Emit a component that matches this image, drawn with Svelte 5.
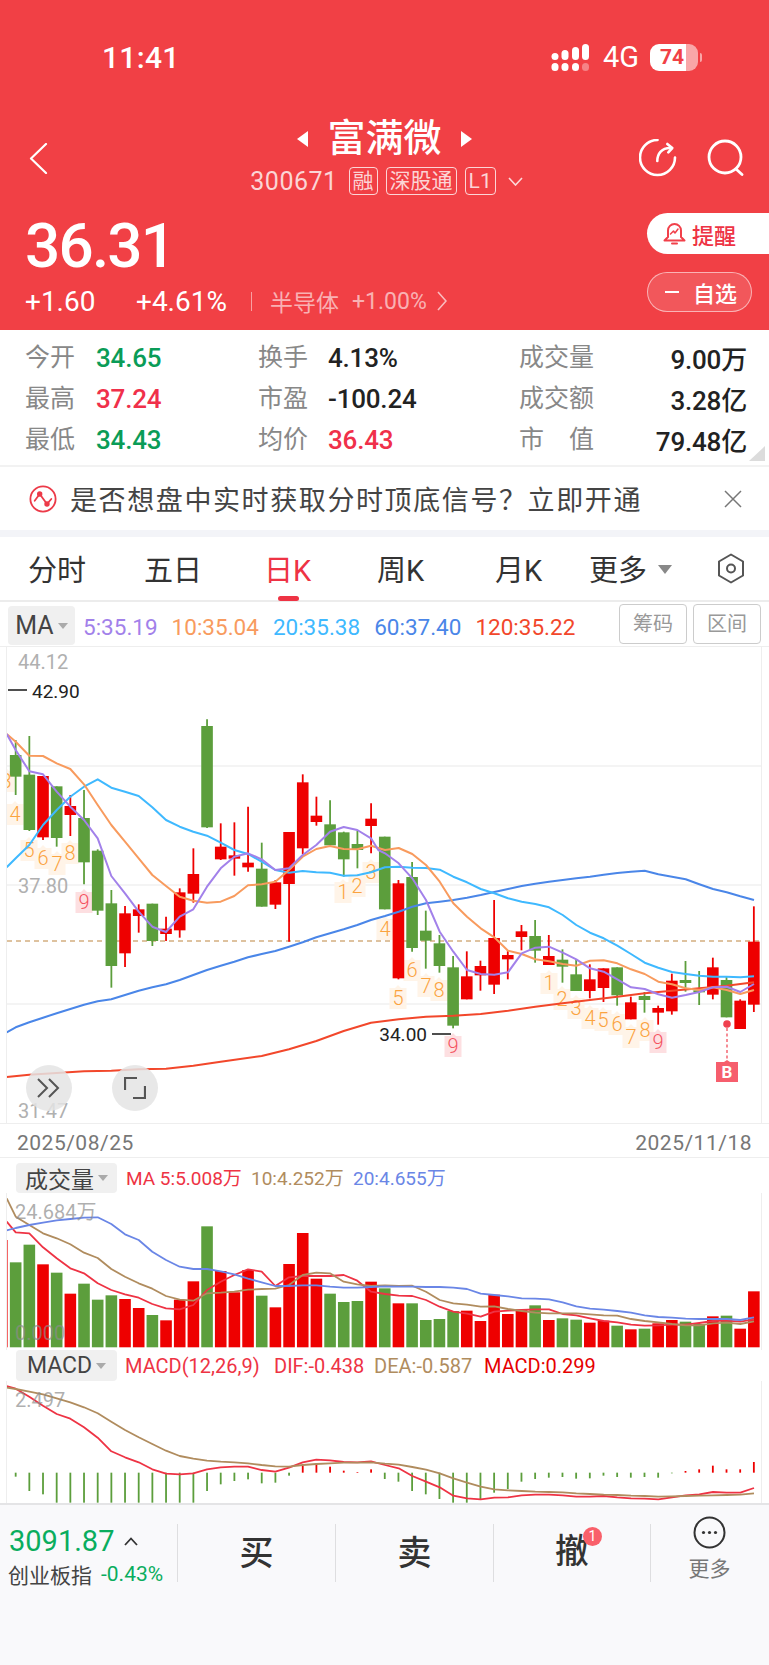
<script>
  const X0 = 15.67, STEP = 13.67;
  const cx = (i) => X0 + STEP * i;

  // zoomed crops were read at 3x, so these convert back to page pixels
  const zA = (v) => 650 + v / 3;
  const zB = (v) => 800 + v / 3;
  const zV = (v) => 1150 + v / 3;

  const rawA = [
    ["g",270,315,380,435],["g",258,374,540,543],["r",378,378,562,570],["g",409,409,564,590],["r",435,468,495,558],
    ["g",420,504,637,703],["g",598,602,782,795],["g",720,760,948,1013],["r",768,790,910,951],["r",763,778,798,848],
    ["g",761,761,873,888],["r",800,836,852,873],["r",715,727,841,863],["r",595,672,731,758],["g",208,228,532,534],
    ["r",520,590,628,630],["r",517,616,626,677],["r",470,638,652,665],["g",578,656,770,770],["r",690,697,764,777],
    ["r",546,546,702,875],["r",373,397,595,612],["r",440,497,516,527],["g",451,523,586,586],["g",545,547,628,680],
    ["g",543,582,600,655],["r",460,506,528,610],["g",560,560,778,778]
  ];
  const rawB = [
    ["r",240,250,535,538],["g",186,231,444,455],["g",332,392,422,506],["g",405,430,498,518],["g",468,502,677,685],
    ["r",454,529,598,598],["r",482,498,526,572],["r",300,414,554,582],["r",452,465,478,538],["r",375,394,411,451],
    ["g",360,408,452,488],["r",405,468,495,495],["g",448,479,500,548],["g",478,523,573,573],["r",493,538,573,595],
    ["r",505,505,564,606],["g",502,502,586,617],["r",590,607,658,658],["g",576,588,600,638],["r",617,624,638,674],
    ["r",521,542,634,644],["g",483,540,549,575],["g",513,571,575,615],["r",473,502,584,598],["g",530,540,652,652],
    ["r",598,602,687,687],["r",319,425,614,636]
  ];
  const candles = [
    ...rawA.map((c) => [c[0], ...c.slice(1).map(zA)]),
    ...rawB.map((c) => [c[0], ...c.slice(1).map(zB)])
  ];

  const line = (a, ay, b, by) =>
    [...a.map(([x, y]) => [x / 3, ay(y)]), ...b.map(([x, y]) => [x / 3 + 385, by(y)])]
      .map(([x, y]) => x.toFixed(1) + "," + y.toFixed(1))
      .join(" ");

  const ma5 = line(
    [[20,252],[47,300],[88,364],[129,373],[170,425],[211,470],[252,510],[293,565],[334,678],[375,730],[416,785],[457,830],[498,846],[539,800],[580,778],[621,710],[662,655],[703,620],[744,610],[785,628],[826,660],[867,655],[908,615],[949,585],[990,545],[1031,531],[1072,540],[1113,565]],
    zA,
    [[-20,150],[0,160],[41,190],[82,235],[123,300],[164,395],[205,455],[246,510],[287,522],[328,524],[369,517],[410,460],[451,443],[492,440],[533,458],[574,478],[615,505],[656,515],[697,538],[738,562],[779,567],[820,583],[861,593],[902,585],[943,576],[984,562],[1025,560],[1066,576],[1107,552]],
    zB
  );
  const ma10 = line(
    [[20,252],[47,275],[88,317],[129,318],[170,340],[211,357],[252,403],[293,465],[334,525],[375,575],[416,625],[457,675],[498,708],[539,740],[580,752],[621,758],[662,755],[703,738],[744,706],[785,703],[826,695],[867,660],[908,620],[949,597],[990,588],[1031,597],[1072,598],[1113,587]],
    zA,
    [[0,150],[41,144],[82,162],[123,195],[164,245],[205,310],[246,350],[287,385],[328,412],[369,452],[410,462],[451,478],[492,484],[533,492],[574,497],[615,482],[656,481],[697,490],[738,508],[779,522],[820,545],[861,553],[902,565],[943,570],[984,562],[1025,570],[1066,582],[1107,570]],
    zB
  );
  const ma20 = line(
    [[20,652],[47,625],[88,585],[129,525],[170,480],[211,440],[252,410],[293,388],[334,413],[375,425],[416,438],[457,472],[498,510],[539,530],[580,545],[621,557],[662,578],[703,600],[744,612],[785,635],[826,660],[867,668],[908,663],[949,667],[990,668],[1031,677],[1072,676],[1113,667]],
    zA,
    [[0,202],[41,200],[82,203],[123,204],[164,209],[205,230],[246,247],[287,267],[328,280],[369,295],[410,305],[451,312],[492,322],[533,345],[574,375],[615,398],[656,415],[697,437],[738,462],[779,488],[820,503],[861,516],[902,522],[943,527],[984,530],[1025,530],[1066,532],[1107,529]],
    zB
  );
  const ma60 = line(
    [[20,1147],[47,1132],[88,1117],[129,1103],[170,1090],[211,1077],[252,1064],[293,1054],[334,1048],[375,1035],[416,1022],[457,1012],[498,1003],[539,990],[580,975],[621,960],[662,947],[703,935],[744,922],[785,912],[826,903],[867,890],[908,877],[949,862],[990,850],[1031,838],[1072,825],[1113,810]],
    zA,
    [[0,348],[41,335],[82,320],[123,310],[164,305],[205,300],[246,293],[287,285],[328,276],[369,267],[410,258],[451,251],[492,245],[533,240],[574,235],[615,230],[656,224],[697,219],[738,215],[779,212],[820,223],[861,230],[902,238],[943,253],[984,267],[1025,277],[1066,289],[1107,300]],
    zB
  );
  const ma120 = line(
    [[20,1281],[88,1274],[170,1269],[252,1264],[334,1262],[416,1258],[498,1256],[580,1247],[662,1235],[785,1218],[867,1198],[949,1173],[1031,1143],[1113,1118]],
    zA,
    [[0,663],[41,658],[82,654],[123,650],[205,647],[287,642],[369,632],[451,620],[533,610],[615,600],[697,590],[779,580],[861,572],[943,565],[1025,557],[1107,547]],
    zB
  );

  const tags = [
    [6,780,"3"],[15,813,"4"],[29,849,"5"],[43,857,"6"],[57,863,"7"],[70,852,"8"],[84,901,"9",true],
    [343,891,"1"],[357,885,"2"],[371,871,"3"],[385,928,"4"],
    [398,997,"5"],[412,969,"6"],[426,985,"7"],[439,989,"8"],[453,1045,"9",true],
    [549,982,"1"],[562,998,"2"],[576,1007,"3"],[590,1017,"4"],[603,1019,"5"],[617,1023,"6"],[631,1036,"7"],[645,1029,"8"],[658,1041,"9",true]
  ];

  const volA = [["g",337],["g",284],["r",343],["g",368],["r",431],["g",401],["g",449],["g",436],["r",447],["r",474],["g",495],["r",511],["r",449],["r",394],["g",229],["r",363],["r",427],["r",360],["g",437],["r",472],["r",342],["r",249],["r",386],["g",431],["g",456],["g",453],["r",395],["g",415],
    ["r",460],["g",460],["g",510],["g",507],["g",483],["r",482],["r",513],["r",434],["r",492],["r",478],["g",466],["r",510],["g",505],["g",509],["r",518],["r",512],["g",527],["r",538],["g",536],["r",520],["r",510],["g",515],["g",522],["r",499],["g",497],["r",536],["r",424]];

  const volMa5 = line(
    [[20,215],[47,247],[88,250],[129,292],[170,325],[211,355],[252,370],[293,400],[334,420],[375,433],[416,443],[457,462],[498,475],[539,478],[580,465],[621,420],[662,395],[703,375],[744,358],[785,365],[826,408],[867,382],[908,378],[949,378],[990,378],[1031,375],[1072,392],[1113,425]],
    zV,
    [[0,432],[41,437],[82,438],[123,450],[164,470],[205,485],[246,491],[287,500],[328,485],[369,482],[410,480],[451,478],[492,478],[533,492],[574,496],[615,505],[656,513],[697,517],[738,524],[779,527],[820,526],[861,524],[902,524],[943,519],[984,513],[1025,512],[1066,515],[1107,508]],
    zV
  );
  const volMa10 = line(
    [[20,145],[47,200],[88,225],[129,250],[170,265],[211,283],[252,308],[293,324],[334,357],[375,380],[416,400],[457,416],[498,438],[539,449],[580,452],[621,430],[662,428],[703,425],[744,419],[785,417],[826,416],[867,405],[908,375],[949,368],[990,370],[1031,395],[1072,403],[1113,408]],
    zV,
    [[0,406],[41,408],[82,407],[123,425],[164,450],[205,460],[246,464],[287,470],[328,469],[369,477],[410,483],[451,488],[492,490],[533,490],[574,490],[615,493],[656,496],[697,497],[738,507],[779,513],[820,517],[861,522],[902,526],[943,526],[984,520],[1025,518],[1066,522],[1107,514]],
    zV
  );
  const volMa20 = line(
    [[20,241],[47,234],[88,225],[129,218],[170,211],[211,207],[252,203],[293,202],[334,222],[375,253],[416,270],[457,305],[498,330],[539,350],[580,357],[621,357],[662,364],[703,373],[744,386],[785,397],[826,408],[867,408],[908,406],[949,406],[990,410],[1031,413],[1072,413],[1113,411]],
    zV,
    [[0,409],[41,410],[82,410],[123,411],[164,411],[205,413],[246,417],[287,431],[328,435],[369,439],[410,445],[451,446],[492,448],[533,457],[574,469],[615,476],[656,479],[697,483],[738,488],[779,496],[820,501],[861,503],[902,506],[943,507],[984,507],[1025,507],[1066,510],[1107,502]],
    zV
  );

  const dif = line(
    [[20,708],[47,716],[88,740],[129,767],[170,792],[211,806],[252,832],[293,863],[334,904],[375,922],[416,937],[457,958],[498,971],[539,973],[580,970],[621,958],[662,952],[703,950],[744,950],[785,960],[826,965],[867,953],[908,937],[949,929],[990,931],[1031,936],[1072,937],[1113,934]],
    zV,
    [[0,945],[41,955],[82,978],[123,995],[164,1012],[205,1037],[246,1045],[287,1048],[328,1043],[369,1042],[410,1036],[451,1034],[492,1034],[533,1036],[574,1040],[615,1040],[656,1038],[697,1042],[738,1045],[779,1046],[820,1048],[861,1042],[902,1036],[943,1033],[984,1026],[1025,1028],[1066,1028],[1107,1014]],
    zV
  );
  const dea = line(
    [[20,713],[47,717],[88,725],[129,733],[170,745],[211,757],[252,772],[293,790],[334,815],[375,840],[416,862],[457,882],[498,902],[539,918],[580,926],[621,932],[662,935],[703,937],[744,940],[785,945],[826,949],[867,950],[908,945],[949,942],[990,940],[1031,938],[1072,938],[1113,937]],
    zV,
    [[0,941],[41,944],[82,951],[123,959],[164,970],[205,985],[246,998],[287,1010],[328,1018],[369,1021],[410,1023],[451,1025],[492,1026],[533,1027],[574,1030],[615,1032],[656,1034],[697,1035],[738,1037],[779,1038],[820,1040],[861,1039],[902,1038],[943,1037],[984,1036],[1025,1035],[1066,1034],[1107,1030]],
    zV
  );

  // histogram ends, zero line sits at 968 in the crop
  const hist = [980,1023,1033,1058,1058,1058,1058,1058,1058,1058,1058,1058,1058,1058,1023,1003,993,988,1000,998,977,947,940,950,962,966,958,987,
    995,1023,1033,1047,1058,1058,1050,1028,1017,995,987,983,981,986,985,977,981,983,981,983,970,963,958,947,958,958,936];

  const quotes = [
    [["今开","34.65","green"],["换手","4.13%",""],["成交量","9.00万",""]],
    [["最高","37.24","red"],["市盈","-100.24",""],["成交额","3.28亿",""]],
    [["最低","34.43","green"],["均价","36.43","red"],["市值","79.48亿",""]]
  ];
  const tabs = [["分时",28],["五日",144],["日K",264],["周K",377],["月K",495]];
</script>

<div class="phone">
  <header class="head">
    <div class="status">
      <span class="time">11:41</span>
      <div class="status-right">
        <svg class="signal" width="38" height="27" viewBox="0 0 38 27" fill="#fff">
          <rect x="0.5" y="9" width="7" height="7" rx="3.5"/><rect x="0.5" y="19" width="7" height="8" rx="3.5"/>
          <rect x="10.5" y="6" width="7" height="10" rx="3.5"/><rect x="10.5" y="19" width="7" height="8" rx="3.5"/>
          <rect x="21" y="3" width="7" height="13" rx="3.5"/><rect x="21" y="19" width="7" height="8" rx="3.5"/>
          <rect x="31" y="0" width="7" height="16" rx="3.5"/><rect x="31" y="19" width="7" height="8" rx="3.5" fill-opacity="0.35"/>
        </svg>
        <span class="net">4G</span>
        <div class="battery"><span>74</span></div>
        <i class="nub"></i>
      </div>
    </div>

    <div class="nav">
      <svg class="back" width="19" height="31" viewBox="0 0 19 31" fill="none" stroke="#fff" stroke-width="2.2" stroke-linejoin="round" stroke-linecap="round">
        <polyline points="17,1 2,15.5 17,30"/>
      </svg>
      <div class="title-wrap">
        <div class="title-row">
          <i class="tri tri-l"></i>
          <span class="title">富满微</span>
          <i class="tri tri-r"></i>
        </div>
        <div class="sub-row">
          <span class="code">300671</span>
          <span class="tag">融</span>
          <span class="tag">深股通</span>
          <span class="tag">L1</span>
          <svg width="15" height="9" viewBox="0 0 15 9" fill="none" stroke="#fff" stroke-opacity="0.8" stroke-width="1.6"><polyline points="1,1 7.5,8 14,1"/></svg>
        </div>
      </div>
      <div class="nav-icons">
        <svg width="38" height="38" viewBox="0 0 38 38" fill="none" stroke="#fff" stroke-width="2.6" stroke-linecap="round" stroke-linejoin="round">
          <path d="M18.5 1A17.5 17.5 0 1 0 36 18.5"/>
          <path d="M18.3 22c0-7 4-13 13-13"/>
          <polyline points="28.3,5 33.3,9 29.3,13.3"/>
        </svg>
        <svg width="37" height="37" viewBox="0 0 37 37" fill="none" stroke="#fff" stroke-width="2.8" stroke-linecap="round">
          <circle cx="18" cy="18" r="16"/>
          <line x1="29" y1="30" x2="35" y2="35.5"/>
        </svg>
      </div>
    </div>

    <div class="price-row">
      <div class="price-left">
        <div class="price">36.31</div>
        <div class="change">
          <span class="chg-a">+1.60</span>
          <span class="chg-b">+4.61%</span>
          <i class="bar"></i>
          <span class="sector">半导体</span>
          <span class="sector-pct">+1.00%</span>
          <svg width="10" height="20" viewBox="0 0 10 20" fill="none" stroke="#fff" stroke-opacity="0.65" stroke-width="1.6"><polyline points="1,1 9,10 1,19"/></svg>
        </div>
      </div>
      <div class="price-actions">
        <div class="remind">
          <svg width="23" height="23" viewBox="0 0 23 23" fill="none" stroke="#f1404a" stroke-width="2" stroke-linejoin="round" stroke-linecap="round">
            <path d="M5 15V8.5a6.5 6.5 0 0 1 13 0V15l3.5 3.5H1.5z"/>
            <path d="M9 21.5h5"/>
            <polyline points="7.5,12 10.5,9 12,11 15,7" stroke-width="1.5"/>
          </svg>
          <span>提醒</span>
        </div>
        <div class="watch"><i></i><span>自选</span></div>
      </div>
    </div>
  </header>

  <section class="quotes">
    {#each quotes as row}
      {#each row as q, i}
        <span class="q-label" class:wide={i === 2} class:spread={q[0] === "市值"}>
          {#if q[0] === "市值"}<b>市</b><b>值</b>{:else}{q[0]}{/if}
        </span>
        <span class="q-val {q[2]}" class:end={i === 2}>{q[1]}</span>
      {/each}
    {/each}
    <i class="corner"></i>
  </section>

  <section class="notice">
    <svg width="28" height="28" viewBox="0 0 28 28" fill="none" stroke="#ec3a48" stroke-width="1.8" stroke-linecap="round">
      <circle cx="14" cy="14" r="12.6"/>
      <polyline points="5.7,15.7 10.7,9 18,19 22.3,14"/>
      <g fill="#ec3a48" stroke="none"><circle cx="10.7" cy="9" r="2.7"/><circle cx="18" cy="19" r="2.7"/></g>
    </svg>
    <span class="notice-text">是否想盘中实时获取分时顶底信号？立即开通</span>
    <svg class="notice-x" width="18" height="18" viewBox="0 0 18 18" stroke="#777" stroke-width="1.5" fill="none"><path d="M1 1l16 16M17 1L1 17"/></svg>
  </section>

  <nav class="tabs">
    {#each tabs as t}
      <span class="tab" class:active={t[0] === "日K"} style="left:{t[1]}px">{t[0]}</span>
    {/each}
    <span class="tab" style="left:589px">更多</span>
    <i class="tab-caret"></i>
    <svg class="tab-hex" width="28" height="31" viewBox="0 0 28 31" fill="none" stroke="#555" stroke-width="2" stroke-linejoin="round">
      <path d="M14 1.5l12 7v14l-12 7-12-7v-14z"/>
      <circle cx="14" cy="15.5" r="4"/>
    </svg>
    <i class="tab-ink"></i>
  </nav>

  <div class="ma-row">
    <div class="pill pill-ma">MA<i></i></div>
    <span class="leg ma5">5:35.19</span>
    <span class="leg ma10">10:35.04</span>
    <span class="leg ma20">20:35.38</span>
    <span class="leg ma60">60:37.40</span>
    <span class="leg ma120">120:35.22</span>
    <div class="ghost-btns">
      <span>筹码</span>
      <span>区间</span>
    </div>
  </div>

  <div class="chart main">
    <svg width="769" height="476" viewBox="0 647 769 476">
      <defs><clipPath id="plot"><rect x="7" y="647" width="755" height="476"/></clipPath></defs>
      {#each [766, 885, 1004] as y}
        <line x1="7" x2="762" y1={y} y2={y} stroke="#f0f0f0" stroke-width="1.5"/>
      {/each}
      <g clip-path="url(#plot)">
        {#each tags as t}
          <path d="M{t[0]-8.5} {t[1]-9} L{t[0]-3} {t[1]-9} L{t[0]} {t[1]-12} L{t[0]+3} {t[1]-9} L{t[0]+8.5} {t[1]-9} V{t[1]+12} H{t[0]-8.5} Z" fill={t[3] ? "#fddfe1" : "#fff4e8"}/>
        {/each}
      </g>
      <line x1="7" x2="762" y1="941" y2="941" stroke="#d4ae80" stroke-width="1.5" stroke-dasharray="5 4"/>
      {#each candles as c, i}
        <line x1={cx(i)} x2={cx(i)} y1={c[1]} y2={c[4]} stroke={c[0] === "r" ? "#ee0000" : "#5c9e3c"} stroke-width="1.8"/>
        <rect x={cx(i) - 5.8} y={c[2]} width="11.6" height={Math.max(c[3] - c[2], 2)} fill={c[0] === "r" ? "#ee0000" : "#5c9e3c"}/>
      {/each}
      <g clip-path="url(#plot)">
        {#each tags as t}
          <text class="turn" x={t[0]} y={t[1] + 8} fill={t[3] ? "#f4525f" : "#fba33f"} text-anchor="middle">{t[2]}</text>
        {/each}
      </g>
      <g fill="none" stroke-width="2" stroke-linejoin="round">
        <polyline points={ma120} stroke="#f2472b"/>
        <polyline points={ma60} stroke="#4a86e8"/>
        <polyline points={ma20} stroke="#3fb9ff"/>
        <polyline points={ma10} stroke="#f89b5e"/>
        <polyline points={ma5} stroke="#a281ea"/>
      </g>
      <text class="axis" x="18" y="669">44.12</text>
      <line x1="8" x2="27" y1="690" y2="690" stroke="#222" stroke-width="1.6"/>
      <text class="axis dark" x="32" y="698">42.90</text>
      <text class="axis" x="18" y="893">37.80</text>
      <text class="axis dark" x="427" y="1041" text-anchor="end">34.00</text>
      <line x1="432" x2="451" y1="1034" y2="1034" stroke="#222" stroke-width="1.6"/>
      <text class="axis" x="18" y="1118">31.47</text>
      <circle cx="727" cy="1024" r="3.8" fill="#f0404f"/>
      <line x1="727" x2="727" y1="1028" y2="1061" stroke="#f0404f" stroke-width="1.2" stroke-dasharray="3 2.5"/>
      <path d="M716 1062h8l3-2 3 2h8v20h-22z" fill="#f65e6d"/>
      <text class="b-mark" x="727" y="1078" text-anchor="middle">B</text>
    </svg>
    <button class="round round-a" aria-label="展开">
      <svg width="24" height="20" viewBox="0 0 24 20" fill="none" stroke="#555" stroke-width="2"><polyline points="1,1 10,10 1,19"/><polyline points="12,1 21,10 12,19"/></svg>
    </button>
    <button class="round round-b" aria-label="全屏">
      <svg width="22" height="22" viewBox="0 0 22 22" fill="none" stroke="#555" stroke-width="2.2"><polyline points="1,13 1,1 13,1"/><polyline points="21,9 21,21 9,21"/></svg>
    </button>
  </div>

  <div class="dates"><span>2025/08/25</span><span>2025/11/18</span></div>

  <div class="legend-row vol-leg">
    <div class="pill pill-sub">成交量<i></i></div>
    <span class="red-t l-a">MA 5:5.008万</span>
    <span class="brown-t l-b">10:4.252万</span>
    <span class="blue-t l-c">20:4.655万</span>
  </div>

  <div class="chart vol">
    <svg width="769" height="157" viewBox="0 1193 769 157">
      <rect x="6" y={zV(270)} width="1.6" height={1347.3 - zV(270)} fill="#ee0000"/>
      {#each volA as b, i}
        <rect x={cx(i) - 5.8} y={zV(b[1])} width="11.6" height={1347.3 - zV(b[1])} fill={b[0] === "r" ? "#ee0000" : "#5c9e3c"}/>
      {/each}
      <g fill="none" stroke-width="1.8" stroke-linejoin="round">
        <polyline points={volMa5} stroke="#ee3344"/>
        <polyline points={volMa10} stroke="#b08c5e"/>
        <polyline points={volMa20} stroke="#6a86e6"/>
      </g>
      <text class="axis tint" x="15" y="1219">24.684万</text>
      <text class="axis tint" x="15" y="1340">0.000</text>
    </svg>
  </div>

  <div class="legend-row macd-leg">
    <div class="pill pill-sub">MACD<i></i></div>
    <span class="red-t m-a">MACD(12,26,9)</span>
    <span class="red-t m-b">DIF:-0.438</span>
    <span class="brown-t m-c">DEA:-0.587</span>
    <span class="pure-t m-d">MACD:0.299</span>
  </div>

  <div class="chart macd">
    <svg width="769" height="122" viewBox="0 1381 769 122">
      {#each hist as h, i}
        <rect x={cx(i) - 0.9} y={h > 968 ? zV(968) : zV(h)} width="1.8" height={Math.abs(zV(h) - zV(968))} fill={h > 968 ? "#5c9e3c" : "#ee0000"}/>
      {/each}
      <g fill="none" stroke-width="1.8" stroke-linejoin="round">
        <polyline points={dif} stroke="#ee3344"/>
        <polyline points={dea} stroke="#b08c5e"/>
      </g>
      <text class="axis tint" x="15" y="1407">2.497</text>
    </svg>
  </div>

  <footer class="foot">
    <div class="index">
      <div class="idx-top"><span class="idx-num">3091.87</span><svg width="14" height="9" viewBox="0 0 14 9" fill="none" stroke="#333" stroke-width="1.8"><polyline points="1,8 7,1.5 13,8"/></svg></div>
      <div class="idx-bot"><span>创业板指</span><b>-0.43%</b></div>
    </div>
    <div class="act">买</div>
    <div class="act">卖</div>
    <div class="act"><span class="withdraw">撤<em>1</em></span></div>
    <div class="more">
      <svg width="33" height="33" viewBox="0 0 33 33" fill="none" stroke="#333" stroke-width="2">
        <circle cx="16.5" cy="16.5" r="15"/>
        <g fill="#333" stroke="none"><circle cx="10.5" cy="16.5" r="1.6"/><circle cx="16.5" cy="16.5" r="1.6"/><circle cx="22.5" cy="16.5" r="1.6"/></g>
      </svg>
      <span>更多</span>
    </div>
  </footer>
</div>

<style>
  :global(body) {
    margin: 0;
    background: #fff;
  }

  .phone {
    width: 769px;
    height: 1665px;
    overflow: hidden;
    font-family: "Roboto", "Noto Sans CJK SC", sans-serif;
    color: #333;
    background: #fff;
    position: relative;
  }

  .head {
    height: 330px;
    background: #f14045;
    color: #fff;
    display: flex;
    flex-direction: column;
  }

  .status {
    height: 71px;
    padding: 44px 67px 0 102px;
    box-sizing: border-box;
    display: flex;
    justify-content: space-between;
    align-items: center;
  }

  .time {
    font-size: 30px;
    font-weight: 500;
    line-height: 27px;
    letter-spacing: 0.3px;
  }

  .status-right {
    display: flex;
    align-items: center;
    position: relative;
  }

  .net {
    font-size: 29px;
    line-height: 27px;
    margin: 0 11px 0 14px;
  }

  .battery {
    width: 48px;
    height: 27px;
    border-radius: 9px;
    background: linear-gradient(90deg, #fff 0, #fff 36px, #f9a6a8 36px);
    color: #f14045;
    font-size: 21px;
    font-weight: 700;
    line-height: 27px;
    text-align: center;
    padding-right: 4px;
    box-sizing: border-box;
  }

  .nub {
    width: 2px;
    height: 9px;
    margin-left: 2px;
    border-radius: 0 2px 2px 0;
    background: #f9a6a8;
  }

  .nav {
    height: 78px;
    margin-top: 47px;
    padding: 0 25px 0 29px;
    display: grid;
    grid-template-columns: 1fr auto 1fr;
    align-items: center;
  }

  .back {
    margin-top: 2px;
  }

  .title-wrap {
    display: flex;
    flex-direction: column;
    align-items: center;
  }

  .title-row {
    display: flex;
    align-items: center;
    height: 40px;
    gap: 19px;
    margin-left: -4px;
  }

  .title {
    font-size: 38px;
    font-weight: 500;
    line-height: 40px;
    margin-top: -2px;
  }

  .tri {
    width: 0;
    height: 0;
    border-top: 8px solid transparent;
    border-bottom: 8px solid transparent;
  }

  .tri-l {
    border-right: 11px solid #fff;
  }

  .tri-r {
    border-left: 11px solid #fff;
  }

  .sub-row {
    display: flex;
    align-items: center;
    margin-top: 8px;
    height: 28px;
    color: rgba(255, 255, 255, 0.78);
    font-size: 25px;
  }

  .code {
    letter-spacing: 0.5px;
    margin-right: 11px;
  }

  .tag {
    border: 1px solid rgba(255, 255, 255, 0.78);
    border-radius: 4px;
    height: 26px;
    line-height: 26px;
    font-size: 21px;
    padding: 0 3px;
    margin-right: 8px;
  }

  .sub-row svg {
    margin-left: 4px;
  }

  .nav-icons {
    display: flex;
    justify-content: flex-end;
    gap: 30px;
    margin-top: 2px;
  }

  .price-row {
    margin-top: 17px;
    display: flex;
    justify-content: space-between;
  }

  .price-left {
    padding-left: 25px;
  }

  .price {
    font-size: 62px;
    line-height: 62px;
    font-weight: 500;
    letter-spacing: -1.8px;
    margin-top: 2px;
  }

  .change {
    display: flex;
    align-items: center;
    height: 30px;
    margin-top: 9px;
    font-size: 28px;
  }

  .chg-a {
    width: 111px;
  }

  .bar {
    width: 1px;
    height: 19px;
    margin: 0 18px 0 24px;
    background: rgba(255, 255, 255, 0.5);
  }

  .sector {
    font-size: 23px;
    color: rgba(255, 255, 255, 0.6);
  }

  .sector-pct {
    font-size: 23px;
    color: rgba(255, 255, 255, 0.6);
    margin: 0 10px 0 13px;
  }

  .price-actions {
    width: 122px;
    display: flex;
    flex-direction: column;
    gap: 18px;
  }

  .remind {
    height: 41px;
    border-radius: 21px 0 0 21px;
    background: #fff;
    color: #ee3344;
    display: flex;
    align-items: center;
    padding-left: 16px;
    gap: 6px;
    font-size: 22px;
    font-weight: 500;
  }

  .watch {
    width: 105px;
    height: 40px;
    box-sizing: border-box;
    border: 1px solid rgba(255, 255, 255, 0.55);
    border-radius: 20px;
    background: rgba(255, 255, 255, 0.12);
    display: flex;
    align-items: center;
    padding-left: 17px;
    gap: 14px;
    font-size: 22px;
    font-weight: 500;
    color: #fff;
  }

  .watch i {
    width: 14px;
    height: 2.5px;
    background: #fff;
  }

  .quotes {
    height: 137px;
    box-sizing: border-box;
    border-bottom: 2px solid #f2f2f2;
    padding: 7px 22px 0 25px;
    display: grid;
    grid-template-columns: 71px 162px 70px 191px 100px 128px;
    grid-auto-rows: 41px;
    align-items: center;
    position: relative;
  }

  .q-label {
    font-size: 25px;
    color: #888;
    white-space: nowrap;
    margin-bottom: 5px;
  }

  .spread {
    display: flex;
    justify-content: space-between;
    width: 75px;
  }

  .spread b {
    font-weight: 400;
  }

  .q-val {
    font-size: 26px;
    color: #222;
    font-weight: 500;
    letter-spacing: -0.2px;
  }

  .q-val.end {
    text-align: right;
  }

  .green {
    color: #0a9c57;
  }

  .red {
    color: #f0304a;
  }

  .corner {
    position: absolute;
    right: 4px;
    bottom: 4px;
    width: 0;
    height: 0;
    border-left: 16px solid transparent;
    border-bottom: 15px solid #dcdcdc;
  }

  .notice {
    height: 63px;
    display: flex;
    align-items: center;
    padding: 0 27px 0 29px;
    gap: 13px;
    position: relative;
  }

  .notice-text {
    font-size: 27px;
    letter-spacing: 1.6px;
    color: #444;
    white-space: nowrap;
  }

  .notice-x {
    position: absolute;
    right: 27px;
    top: 23px;
  }

  .tabs {
    border-top: 7px solid #f3f4f8;
    height: 72px;
    box-sizing: border-box;
    border-bottom: 2px solid #ececec;
    position: relative;
  }

  .tab {
    position: absolute;
    top: 16px;
    font-size: 29px;
    line-height: 36px;
    color: #333;
    white-space: nowrap;
  }

  .tab.active {
    color: #ee3344;
  }

  .tab-caret {
    position: absolute;
    left: 658px;
    top: 28px;
    border-left: 7px solid transparent;
    border-right: 7px solid transparent;
    border-top: 9px solid #888;
  }

  .tab-hex {
    position: absolute;
    left: 717px;
    top: 16px;
  }

  .tab-ink {
    position: absolute;
    left: 278px;
    bottom: -1px;
    width: 21px;
    height: 5px;
    border-radius: 3px;
    background: #ee3344;
  }

  .ma-row {
    height: 45px;
    box-sizing: border-box;
    padding: 3px 8px 0;
    display: flex;
    align-items: center;
    font-size: 22.5px;
    border-bottom: 1px solid #eee;
    position: relative;
  }

  .pill {
    background: #f0f0f0;
    border-radius: 4px;
    color: #444;
    display: flex;
    align-items: center;
    justify-content: center;
    gap: 4px;
    box-sizing: border-box;
  }

  .pill i {
    border-left: 5px solid transparent;
    border-right: 5px solid transparent;
    border-top: 6px solid #aaa;
  }

  .pill-ma {
    width: 67px;
    height: 39px;
    font-size: 25px;
    margin-right: 8px;
  }

  .leg {
    margin-right: 14px;
    white-space: nowrap;
    line-height: 24px;
    margin-top: 2px;
  }

  .ma5 { color: #a281ea; }
  .ma10 { color: #f89b5e; }
  .ma20 { color: #3fb9ff; }
  .ma60 { color: #4a86e8; }
  .ma120 { color: #f2472b; }

  .ghost-btns {
    position: absolute;
    right: 8px;
    top: 2px;
    display: flex;
    gap: 6px;
  }

  .ghost-btns span {
    width: 68px;
    height: 40px;
    box-sizing: border-box;
    border: 1px solid #ccc;
    border-radius: 4px;
    color: #999;
    font-size: 20px;
    line-height: 38px;
    text-align: center;
  }

  .chart {
    position: relative;
    box-sizing: border-box;
  }

  .chart::before {
    content: "";
    position: absolute;
    left: 6px;
    right: 7px;
    top: 0;
    bottom: 0;
    border-left: 1px solid #eee;
    border-right: 1px solid #eee;
    pointer-events: none;
  }

  .chart svg {
    display: block;
  }

  .turn {
    font-size: 20px;
    font-family: "Roboto", sans-serif;
    font-weight: 300;
  }

  .axis {
    font-size: 20px;
    font-family: "Roboto", sans-serif;
    fill: #b0b0b0;
  }

  .axis.dark {
    fill: #222;
    font-size: 19px;
  }

  .axis.tint {
    fill: rgba(140, 140, 140, 0.7);
    font-family: "Roboto", "Noto Sans CJK SC", sans-serif;
  }

  .b-mark {
    font-size: 17px;
    font-weight: 700;
    font-family: "Roboto", sans-serif;
    fill: #fff;
  }

  .round {
    position: absolute;
    top: 418px;
    width: 46px;
    height: 46px;
    padding: 0;
    border: 0;
    border-radius: 50%;
    background: rgba(228, 228, 228, 0.85);
    display: flex;
    align-items: center;
    justify-content: center;
  }

  .round-a {
    left: 26px;
  }

  .round-b {
    left: 112px;
  }

  .dates {
    height: 35px;
    box-sizing: border-box;
    padding: 4px 17px 0;
    display: flex;
    justify-content: space-between;
    align-items: center;
    font-size: 21px;
    letter-spacing: 0.5px;
    color: #777;
    border-top: 1px solid #eee;
    border-bottom: 1px solid #eee;
  }

  .legend-row {
    position: relative;
    height: 35px;
    font-size: 19px;
    white-space: nowrap;
  }

  .macd-leg {
    height: 31px;
    font-size: 20px;
  }

  .legend-row span {
    position: absolute;
    top: 50%;
    transform: translateY(-50%);
  }

  .pill-sub {
    position: absolute;
    left: 16px;
    top: 5px;
    width: 101px;
    height: 30px;
    font-size: 23px;
  }

  .macd-leg .pill-sub {
    top: 0;
    height: 31px;
  }

  .l-a { left: 126px; }
  .l-b { left: 251px; }
  .l-c { left: 353px; }
  .m-a { left: 125px; }
  .m-b { left: 274px; }
  .m-c { left: 374px; }
  .m-d { left: 484px; }

  .red-t { color: #ee3344; }
  .brown-t { color: #b08c5e; }
  .blue-t { color: #6a86e6; }
  .pure-t { color: #e60000; }

  .foot {
    height: 162px;
    box-sizing: border-box;
    border-top: 2px solid #e4e4e6;
    background: #f9f9fb;
    padding-top: 17px;
    display: grid;
    grid-template-columns: 177px 158px 158px 157px 119px;
    align-items: start;
  }

  .index {
    padding: 5px 0 0 9px;
    margin-top: -2px;
  }

  .idx-top {
    display: flex;
    align-items: center;
    gap: 10px;
  }

  .idx-num {
    font-size: 29px;
    line-height: 32px;
    color: #0aad5e;
  }

  .idx-bot {
    display: flex;
    align-items: center;
    gap: 9px;
    margin-top: 2px;
    font-size: 21px;
    color: #444;
    white-space: nowrap;
    margin-left: -1px;
  }

  .idx-bot b {
    font-weight: 400;
    color: #0aad5e;
  }

  .act,
  .more {
    height: 58px;
    border-left: 1px solid #dedee0;
    margin-top: 2px;
    display: flex;
    align-items: center;
    justify-content: center;
    font-size: 34px;
    font-weight: 500;
    color: #333;
    padding-bottom: 5px;
    box-sizing: border-box;
  }

  .withdraw {
    position: relative;
    line-height: 40px;
  }

  .withdraw em {
    position: absolute;
    left: 28px;
    top: -4px;
    width: 19px;
    height: 19px;
    border-radius: 50%;
    background: #f9606a;
    color: #fff;
    font-size: 14px;
    font-style: normal;
    font-weight: 400;
    line-height: 19px;
    text-align: center;
  }

  .more {
    flex-direction: column;
    justify-content: flex-start;
    gap: 8px;
    height: 65px;
    padding-bottom: 0;
    border-left: 0;
    position: relative;
    margin-top: -6px;
  }

  .more::before {
    content: "";
    position: absolute;
    left: 0;
    top: 8px;
    height: 58px;
    border-left: 1px solid #dedee0;
  }

  .more span {
    font-size: 21px;
    font-weight: 400;
    color: #777;
    line-height: 24px;
  }
</style>
